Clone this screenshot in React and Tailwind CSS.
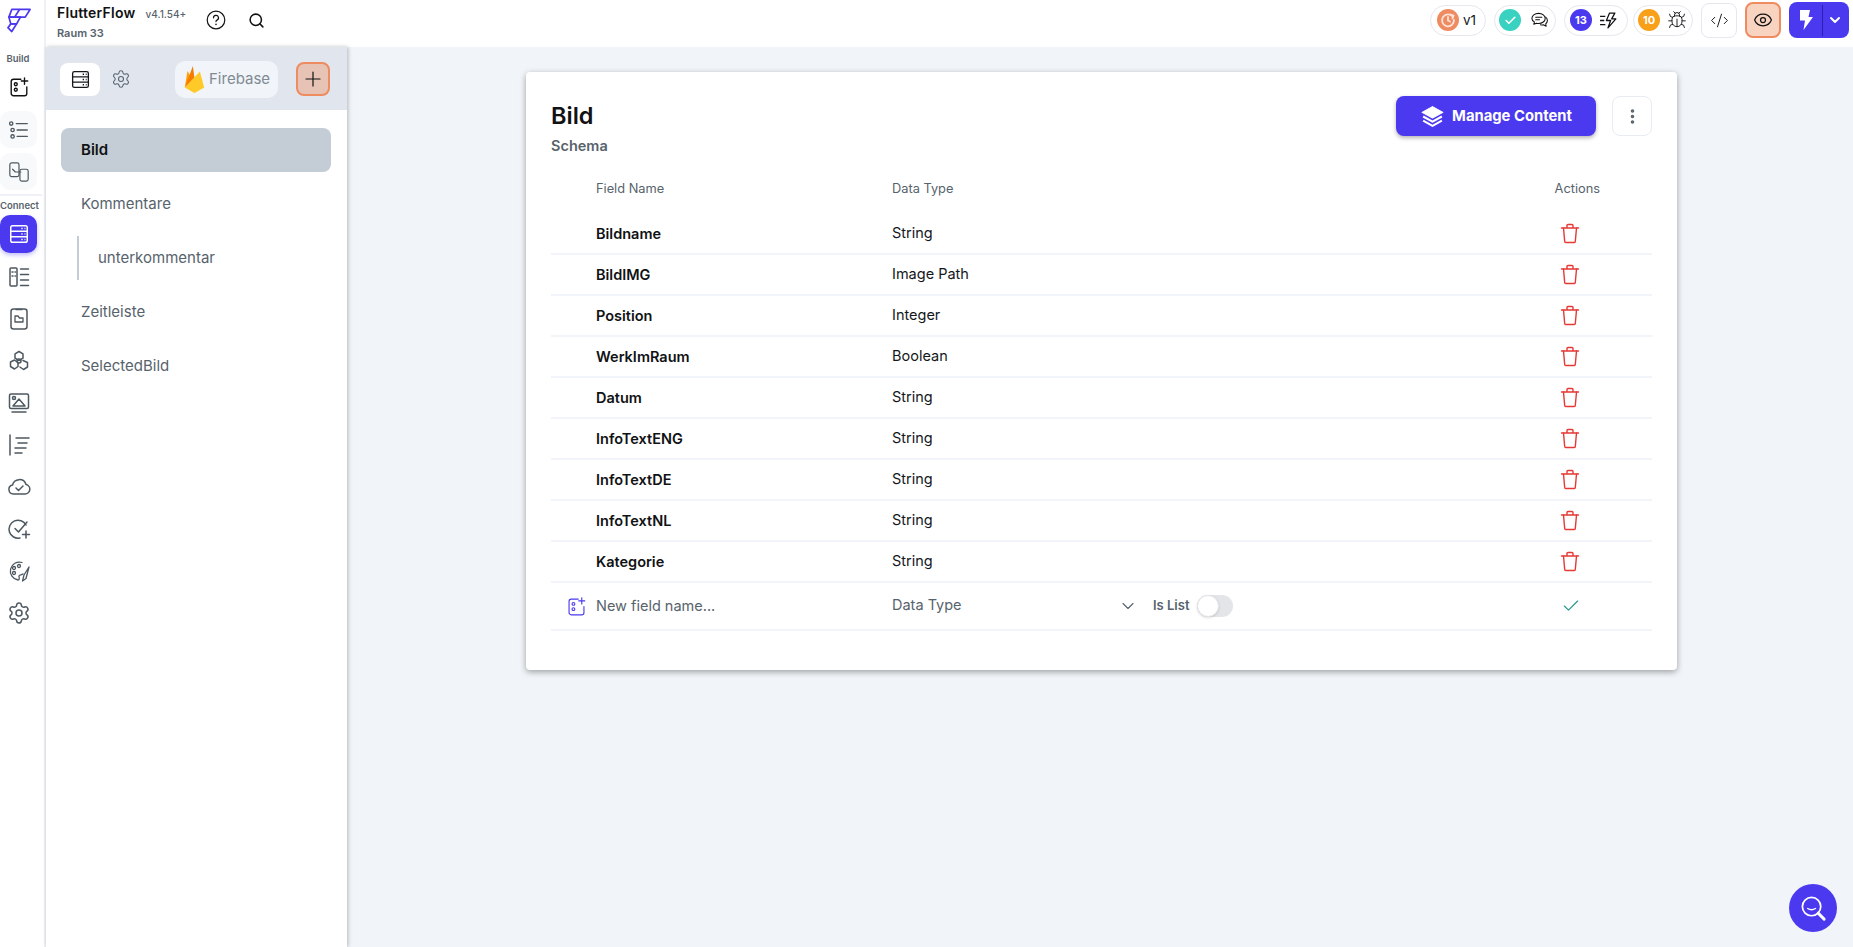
import React from "react";
import { Search, Settings, Eye, Plus, Check, ChevronDown, CodeXml, EllipsisVertical, Bug } from "lucide-react";

const Ic = ({ children, className = "", size = 24, vb = 24, w = 1.5 }) => (
  <svg width={size} height={size} viewBox={`0 0 ${vb} ${vb}`} fill="none" stroke="currentColor" strokeWidth={w} strokeLinecap="round" strokeLinejoin="round" className={className}>{children}</svg>
);

const DbIcon = ({ size = 24, w = 1.6 }) => (
  <svg width={size} height={size} viewBox="0 0 24 24" fill="none" stroke="currentColor" strokeWidth={w}>
    <rect x="3" y="3" width="18" height="18" rx="2" />
    <path d="M3 9h18M3 15h18" />
    <path d="M14.500 6h1.500M18 6h1M14.500 12h1.500M18 12h1M14.500 18h1.500M18 18h1" strokeWidth="1.500" />
  </svg>
);

const AddWidget = ({ size = 24, w = 1.5 }) => (
  <Ic size={size} w={w}>
    <path d="M14 3.500H6a2.500 2.500 0 0 0-2.500 2.500v13A2.500 2.500 0 0 0 6 21.500h12a2.500 2.500 0 0 0 2.500-2.500v-7" />
    <circle cx="8.500" cy="9" r="1.600" />
    <circle cx="8.500" cy="15" r="1.600" />
    <path d="M18 2v7M14.500 5.500h7" />
  </Ic>
);

const railIcons = [
  <Ic key="a"><rect x="3" y="3" width="7" height="18" rx="1" /><path d="M13.500 4h8M13.500 9.500h8M13.500 15h8M13.500 20.500h8M5 7h1M8 7h.5M5 11h1M8 11h.5" /></Ic>,
  <Ic key="b"><rect x="4" y="2" width="16" height="20" rx="2.500" /><path d="M9 2.500h6" /><path d="M8 9h3l1.500 2H16v4H8z" strokeWidth="1.300" /></Ic>,
  <Ic key="c"><path d="M12 2.500l4 2.300v4.400l-4 2.300-4-2.300V4.800z" /><path d="M8 11.500l3 2v4l-3.500 2.500-4-2.500v-4.500l4-2" /><path d="M16 11.500l4.500 2v4.500l-4 2.500-3.500-2.500" /><circle cx="12" cy="12" r="2" /></Ic>,
  <Ic key="d"><rect x="2.500" y="3" width="19" height="14.500" rx="1.500" /><circle cx="7" cy="7" r="1.500" /><path d="M6 15l6-7 6 7zM5 21h14" /></Ic>,
  <Ic key="e"><path d="M3 2v20M9 5h13M11 10h9M8 15h11M8 20h7" /></Ic>,
  <Ic key="f"><path d="M6.500 19A4.500 4.500 0 0 1 5.500 10.100 7 7 0 0 1 19 9.500 4.800 4.800 0 0 1 18 19z" /><path d="M9 13l2.500 2.500L16 11" /></Ic>,
  <Ic key="g"><path d="M19 8A9 9 0 1 0 13 21" /><path d="M8 11.500l3.500 3.500L20 5M19 14v7M15.500 17.500h7" /></Ic>,
  <Ic key="h" w={1.300}><path d="M15 3.500A9 9 0 1 0 11 21c2 0 1-2.500 1-4 0-1 3-1 4-2" /><circle cx="7" cy="9" r="1.500" /><circle cx="12" cy="7" r="1.500" /><circle cx="7" cy="14" r="1.500" /><path d="M22 8l-5 8-1.500 6 3.500-2.500 3-11.500" /></Ic>,
  <Settings key="i" size={24} strokeWidth={1.500} />,
];

const Logo = () => (
  <svg width="25" height="25" viewBox="0 0 26 26" fill="none" stroke="#4b39ef" strokeWidth="1.800" strokeLinejoin="round">
    <path d="M6 1.500h19l-5 8H3z" />
    <path d="M14 1.500l-5 8" />
    <path d="M3 9.500h12l-4 7H5z" />
    <path d="M5 16.500h6l-5 8-4-4z" />
  </svg>
);

const Flame = () => (
  <svg width="23" height="28" viewBox="0 0 20 26">
    <path d="M1 21L3.500 5.500 7 11.500z" fill="#ffa000" />
    <path d="M8.500 1L1 21l9-9z" fill="#f57c00" />
    <path d="M15 6L1 21l8 4.500c.7.300 1.300.300 2 0L19 21z" fill="#ffca28" />
  </svg>
);

const Trash = () => (
  <svg width="20" height="21" viewBox="0 0 20 21" fill="none" stroke="#e53935" strokeWidth="1.400" strokeLinecap="round" strokeLinejoin="round">
    <path d="M1.500 5h17M7 5V2.500A1 1 0 0 1 8 1.500h4a1 1 0 0 1 1 1V5" />
    <path d="M3.500 5l1.200 13.500a1 1 0 0 0 1 1h8.600a1 1 0 0 0 1-1L16.500 5" />
  </svg>
);

const Pill = ({ className, children }) => (
  <div className={`flex h-[31px] items-center rounded-full border border-[#e4e7ee] bg-white ${className}`}>{children}</div>
);

const Dot = ({ className, children }) => (
  <div className={`flex size-[22px] items-center justify-center rounded-full text-[11px] font-bold text-white ${className}`}>{children}</div>
);

const fields = [
  ["Bildname", "String"],
  ["BildIMG", "Image Path"],
  ["Position", "Integer"],
  ["WerkImRaum", "Boolean"],
  ["Datum", "String"],
  ["InfoTextENG", "String"],
  ["InfoTextDE", "String"],
  ["InfoTextNL", "String"],
  ["Kategorie", "String"],
];

export default function App() {
  return (
    <div className="relative flex h-screen w-full flex-col overflow-hidden bg-[#f1f4f8] font-['Inter','Noto_Sans',sans-serif] text-[#101213]">
      <header className="flex h-[47px] shrink-0 items-center bg-white">
        <div className="flex h-full w-[46px] shrink-0 items-center justify-center border-r-2 border-[#eef1f6] pb-[7px] pr-[7px]">
          <Logo />
        </div>
        <div className="mb-[5px] ml-[11px] flex w-[149px] flex-col">
          <div className="flex items-baseline">
            <span className="text-[14px] font-semibold leading-[20px] tracking-[0.25px] text-[#101213]">FlutterFlow</span>
            <span className="ml-[10px] text-[10px] font-medium text-[#57636c]">v4.1.54+</span>
          </div>
          <span className="mt-[3px] text-[11px] font-semibold leading-[14px] text-[#57636c]">Raum 33</span>
        </div>
        <svg width="20" height="20" viewBox="0 0 20 20" fill="none" stroke="#101213" strokeWidth="1.200" strokeLinecap="round" className="mb-[7px]">
          <circle cx="10" cy="10" r="8.800" />
          <path d="M7.500 7.800a2.500 2.500 0 1 1 3.500 2.300c-.7.300-1 .8-1 1.500" />
          <path d="M10 14.300v.1" strokeWidth="1.500" />
        </svg>
        <Search size={17} strokeWidth={2.200} className="mb-[7px] ml-[22px]" />
        <div className="mb-[7px] ml-auto flex items-center pr-1">
          <Pill className="w-[56px] pl-[6px]">
            <Dot className="bg-[#ee8b60]"><svg width="16" height="16" viewBox="0 0 16 16" fill="none" stroke="#fbe3d8" strokeWidth="1.800" strokeLinecap="round"><path d="M13 5A6 6 0 1 0 14 8" /><path d="M8 5v3.500l2 1M10.500 2.500l3 1-1 3" /></svg></Dot>
            <span className="ml-[4px] text-[13.500px] text-[#14181b]">v1</span>
          </Pill>
          <Pill className="ml-[8px] w-[62px] pl-[4px]">
            <Dot className="bg-[#39d2c0]"><Check size={13} strokeWidth={3} /></Dot>
            <svg width="19" height="19" viewBox="0 0 20 20" fill="none" stroke="#101213" strokeWidth="1.100" strokeLinecap="round" strokeLinejoin="round" className="ml-[9px]">
              <path d="M9 2.500c4 0 7 2.300 7 5.300s-3 5.300-7 5.300c-.8 0-1.500-.1-2.200-.3L4 14l.6-2.500C3 10.500 2 9.300 2 7.800c0-3 3-5.300 7-5.300z" />
              <path d="M6 6.500h6.500M6 9.300h4" />
              <path d="M16.500 6.500c1.200 1 1.800 2.300 1.800 3.500 0 1.400-.7 2.600-1.800 3.500l.5 2.500-3-1.500c-1 .3-2 .3-3 0" />
            </svg>
          </Pill>
          <Pill className="ml-[8px] w-[64px] pl-[5px]">
            <Dot className="bg-[#4b39ef]">13</Dot>
            <span className="ml-[7px] flex items-center"><svg width="19" height="19" viewBox="0 0 18 18" fill="none" stroke="#101213" strokeWidth="1.200" strokeLinejoin="round"><path d="M10 2l-3 7h4l-2.500 7L16 7.500h-4L15 2z" /><path d="M1 5h5M1 9h4M1 13h5" /></svg></span>
          </Pill>
          <Pill className="ml-[5px] w-[60px] pl-[4px]">
            <Dot className="bg-[#f9a01b]">10</Dot>
            <Bug size={20} strokeWidth={1.100} className="ml-[7px]" />
          </Pill>
          <div className="ml-[8px] flex h-[35px] w-[36px] items-center justify-center rounded-[8px] border border-[#e4e7ee] bg-white">
            <CodeXml size={19} strokeWidth={1.200} />
          </div>
          <div className="ml-[8px] flex h-[36px] w-[36px] items-center justify-center rounded-[8px] border-2 border-[#ee8b60] bg-[#f8d3c0]">
            <Eye size={20} strokeWidth={1.500} />
          </div>
          <div className="ml-[8px] flex h-[36px] w-[60px] items-center rounded-[8px] bg-[#4b39ef]">
            <div className="flex h-[31px] w-[34px] items-center justify-center border-r border-[#2a1fb0]">
              <svg width="18" height="22" viewBox="0 0 18 22" fill="white"><path d="M3 1h10l-1.500 7H16L6.500 21 8 11.500H3z" /></svg>
            </div>
            <ChevronDown size={16} strokeWidth={3} className="ml-[4px] text-white" />
          </div>
        </div>
      </header>

      <div className="flex min-h-0 flex-1">
        <nav className="flex w-[46px] shrink-0 flex-col border-r-2 border-[#eef1f6] bg-white text-[#4d5860]">
          <div className="mt-[6px] pr-[8px] text-center text-[9.500px] font-semibold leading-[12px] text-[#57636c]">Build</div>
          <div className="mt-[5px] flex h-[34px] w-[37px] items-center justify-center text-[#101213]"><AddWidget size={22} /></div>
          <div className="mt-[7px] flex h-[37px] w-[37px] items-center justify-center rounded-[10px] bg-[#f8f9fb]">
            <Ic size={22}><circle cx="3.500" cy="5" r="1.800" /><circle cx="5" cy="12" r="1.800" /><circle cx="5" cy="19" r="1.800" /><path d="M9 5h12M10 12h11M10 19h11" /></Ic>
          </div>
          <div className="mt-[5px] flex h-[37px] w-[37px] items-center justify-center rounded-[10px] bg-[#f8f9fb]">
            <Ic size={22} w={1.300}><rect x="2" y="2" width="10" height="15" rx="2" /><rect x="13" y="9" width="9" height="13" rx="2" /><path d="M5 9l3 3h6" /></Ic>
          </div>
          <div className="mr-[2px] mt-[4px] h-[2px] bg-[#eef1f6]" />
          <div className="mt-[4px] whitespace-nowrap pr-[8px] text-center text-[9.500px] font-semibold leading-[12px] text-[#57636c]">Connect</div>
          <div className="mt-[3px] flex h-[38px] w-[37px] items-center justify-center rounded-[10px] bg-[#4b39ef] text-white shadow-[0_2px_4px_rgba(75,57,239,0.35)]">
            <DbIcon size={22} />
          </div>
          <div className="mt-[3px] flex flex-col">
            {railIcons.map((icon, i) => (
              <div key={i} className="flex h-[42px] w-[37px] items-center justify-center">{icon}</div>
            ))}
          </div>
        </nav>

        <aside className="z-10 flex w-[301px] shrink-0 flex-col bg-white shadow-[1px_0_4px_rgba(0,0,0,0.25)]">
          <div className="flex h-[63px] shrink-0 items-center bg-[#e1e5ed] pl-[14px] pt-[1px]">
            <div className="flex h-[33px] w-[40px] items-center justify-center rounded-[8px] bg-white text-[#14181b]"><DbIcon size={21} w={1.500} /></div>
            <Settings size={20} strokeWidth={1.300} className="ml-[11px] text-[#57636c]" />
            <div className="ml-[44px] flex h-[37px] w-[103px] items-center rounded-[10px] bg-[#f1f4f8] pl-[8px]">
              <Flame />
              <span className="ml-[3px] text-[15px] text-[#7f8a93]">Firebase</span>
            </div>
            <div className="ml-[18px] flex h-[34px] w-[34px] items-center justify-center rounded-[8px] border-2 border-[#ee8b60] bg-[#e6c3b4]">
              <Plus size={24} strokeWidth={1.200} />
            </div>
          </div>
          <div className="flex flex-col pl-[15px] pt-[18px] text-[15px] text-[#57636c]">
            <div className="flex h-[44px] w-[270px] items-center rounded-[8px] bg-[#c4ccd6] pl-[20px] font-semibold text-[#101213]">Bild</div>
            <div className="mt-[10px] flex h-[44px] items-center pl-[20px]">Kommentare</div>
            <div className="ml-[16px] mt-[10px] flex h-[44px] items-center border-l-2 border-[#c4ccd6] pl-[19px]">unterkommentar</div>
            <div className="mt-[10px] flex h-[44px] items-center pl-[20px]">Zeitleiste</div>
            <div className="mt-[10px] flex h-[44px] items-center pl-[20px]">SelectedBild</div>
          </div>
        </aside>

        <main className="min-w-0 flex-1">
          <section className="ml-[179px] mt-[25px] flex h-[598px] w-[1151px] flex-col rounded-[4px] bg-white px-[25px] shadow-[0_2px_6px_rgba(0,0,0,0.35)]">
            <div className="flex h-[96px] shrink-0 items-start justify-between">
              <div className="pt-[29px]">
                <h1 className="text-[23.500px] font-semibold leading-[30px] text-[#101213]">Bild</h1>
                <p className="mt-[6px] text-[14.500px] font-semibold leading-[18px] text-[#57636c]">Schema</p>
              </div>
              <div className="flex items-center pt-[24px]">
                <div className="flex h-[40px] w-[200px] items-center justify-center rounded-[8px] bg-[#4b39ef] text-white shadow-[0_2px_4px_rgba(0,0,0,0.3)]">
                  <svg width="25" height="25" viewBox="0 0 24 24" fill="white" stroke="white" strokeWidth="1" strokeLinejoin="round"><path d="M12 2.500L22 8l-10 5.500L2 8z" /><path d="M3 12l9 5 9-5" fill="none" strokeWidth="2" /><path d="M3 16l9 5 9-5" fill="none" strokeWidth="2" /></svg>
                  <span className="ml-[7px] text-[14.800px] font-bold">Manage Content</span>
                </div>
                <div className="ml-[16px] flex size-[40px] items-center justify-center rounded-[8px] border border-[#e8ebf1] bg-white text-[#57636c]">
                  <EllipsisVertical size={19} strokeWidth={2.500} />
                </div>
              </div>
            </div>

            <div className="flex h-[46px] shrink-0 items-start pt-[11px] text-[12.800px] text-[#57636c]">
              <span className="ml-[45px] w-[296px]">Field Name</span>
              <span className="flex-1">Data Type</span>
              <span className="mr-[52px]">Actions</span>
            </div>

            <div className="flex flex-col">
              {fields.map(([name, type]) => (
                <div key={name} className="flex h-[41px] shrink-0 items-center border-b-2 border-[#f1f4f8]">
                  <span className="ml-[45px] w-[296px] pt-[1px] text-[14.500px] font-semibold text-[#101213]">{name}</span>
                  <span className="flex-1 pb-[1px] text-[14.500px] text-[#14181b]">{type}</span>
                  <span className="mr-[72px] flex"><Trash /></span>
                </div>
              ))}
              <div className="flex h-[48px] shrink-0 items-center border-b-2 border-[#f1f4f8]">
                <span className="ml-[15px] flex w-[30px] text-[#4b39ef]"><AddWidget size={21} w={1.300} /></span>
                <span className="w-[296px] text-[14.500px] text-[#57636c]">New field name...</span>
                <span className="w-[226px] pb-[2px] text-[14.500px] text-[#57636c]">Data Type</span>
                <ChevronDown size={20} strokeWidth={1.300} className="text-[#57636c]" />
                <span className="ml-[15px] text-[13px] font-semibold text-[#57636c]">Is List</span>
                <div className="ml-[7px] flex h-[22px] w-[36px] items-center rounded-full bg-[#e3e5e8]">
                  <div className="size-[22px] rounded-full border border-[#e3e5e8] bg-white shadow-sm" />
                </div>
                <Check size={20} strokeWidth={1.400} className="ml-auto mr-[71px] text-[#249689]" />
              </div>
            </div>
          </section>
        </main>
      </div>

      <div className="absolute bottom-[15px] right-[16px] z-20 flex size-[48px] items-center justify-center rounded-full bg-[#4b39ef] text-white">
        <svg width="29" height="29" viewBox="0 0 30 30" fill="none" stroke="white" strokeLinecap="round">
          <circle cx="13" cy="13" r="9.500" strokeWidth="1.800" />
          <path d="M19.800 19.800L26 26" strokeWidth="3" />
          <path d="M9 15c2.200 1.300 5.800 1.300 8 0" strokeWidth="1.500" />
        </svg>
      </div>
    </div>
  );
}
